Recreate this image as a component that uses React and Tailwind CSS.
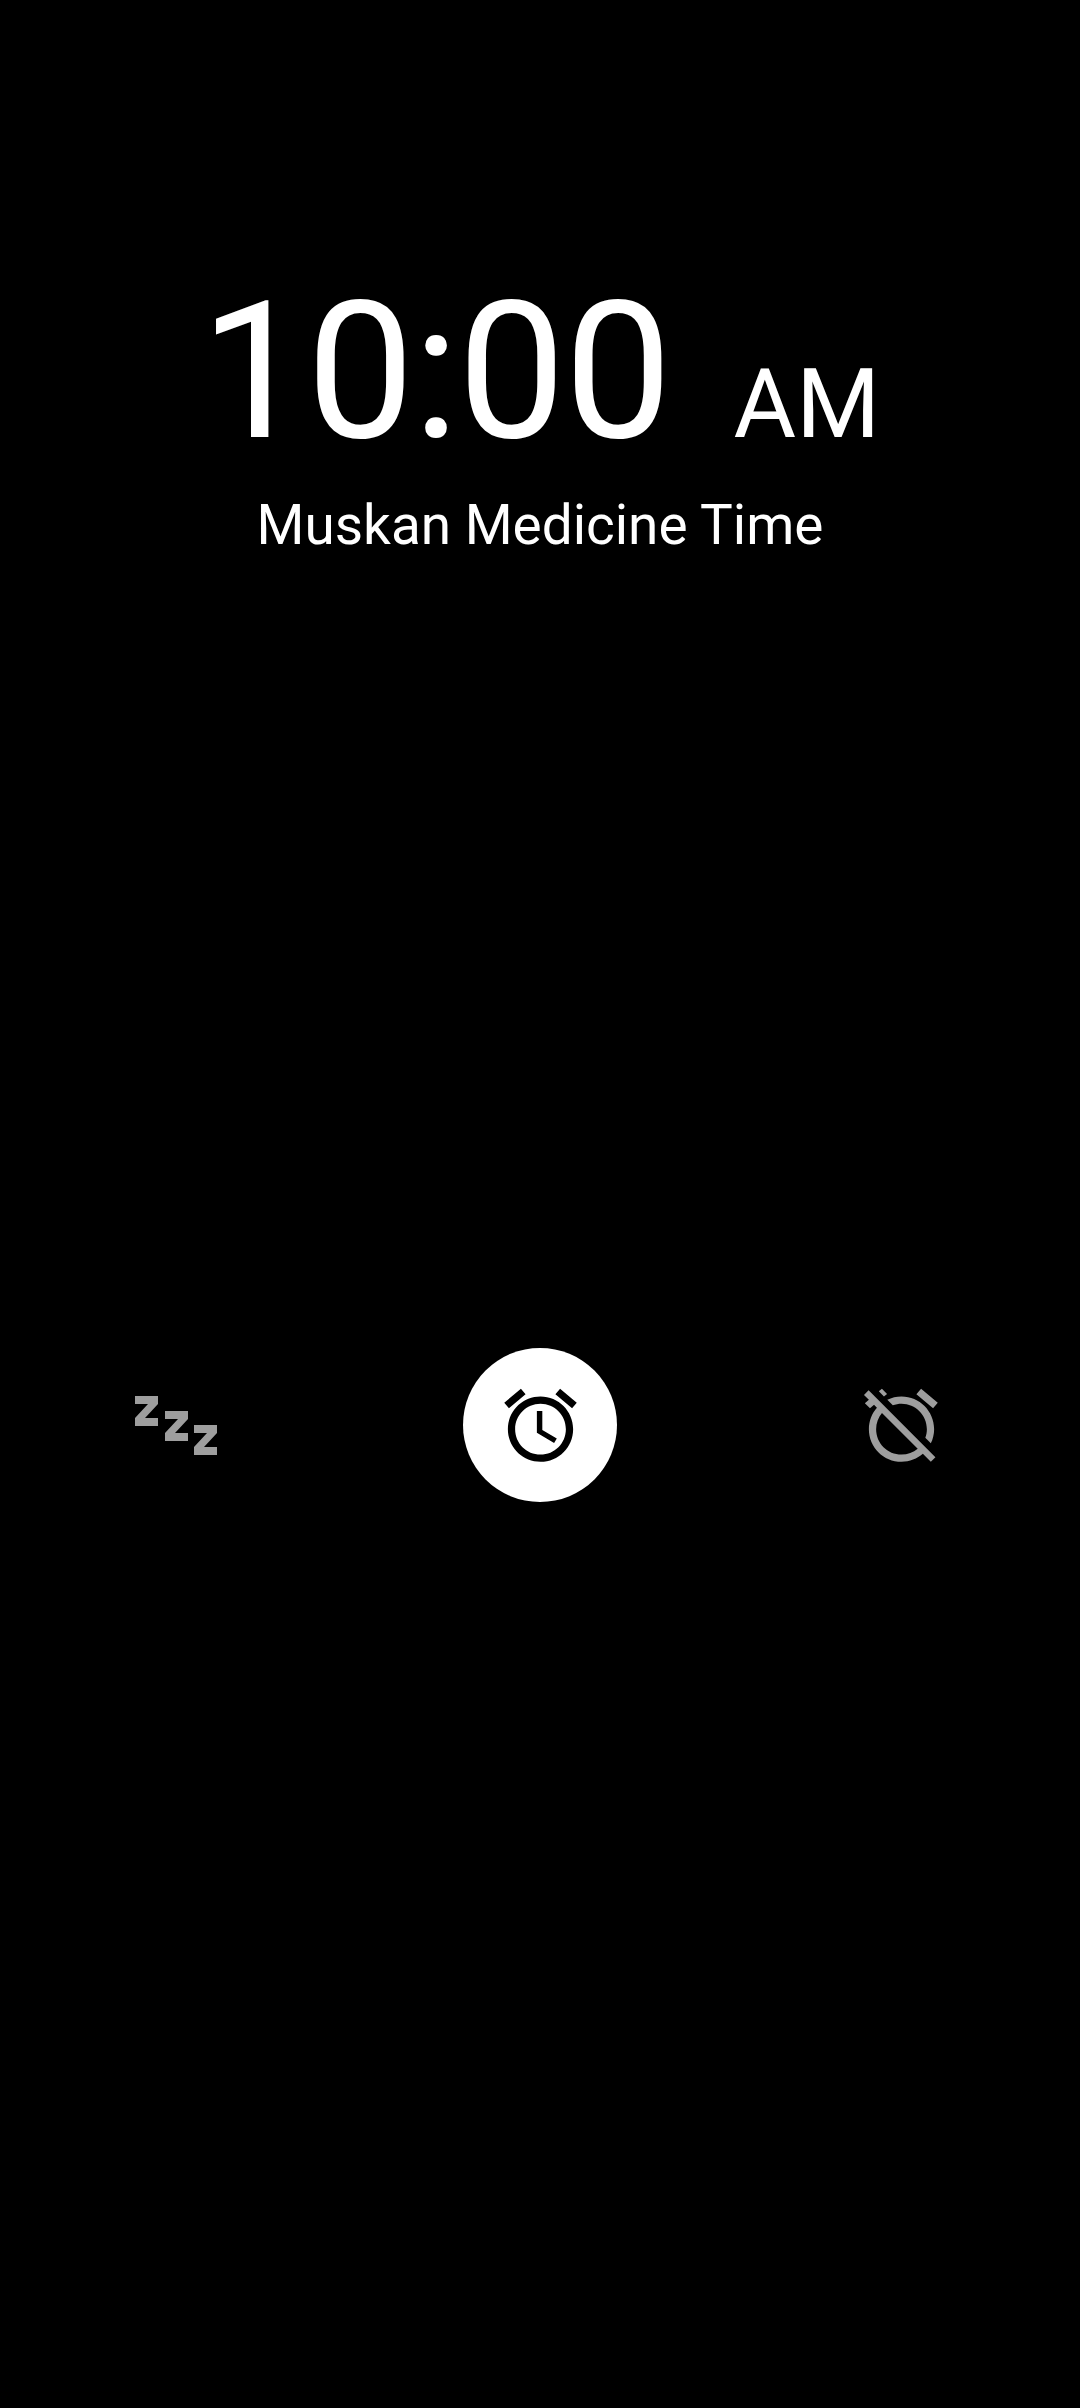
const roboto = { fontFamily: 'Roboto, sans-serif' };

const ZzzIcon = () => (
  <svg width="82" height="59" viewBox="0 0 82 59" fill="#9e9e9e">
    <path d="M0 0H23V8L10 22H23V30H0V22L13 8H0Z" />
    <path d="M30 15H53V23L40 37H53V45H30V37L43 23H30Z" />
    <path d="M59 29H82V37L69 51H82V59H59V51L72 37H59Z" />
  </svg>
);

const AlarmIcon = () => (
  <svg width="87" height="87" viewBox="0 0 24 24" fill="#000">
    <path d="M22 5.72l-4.6-3.86-1.29 1.53 4.6 3.86L22 5.72zM7.88 3.39L6.6 1.86 2 5.71l1.29 1.53 4.59-3.85zM12.5 8H11v6l4.75 2.85.75-1.23-4-2.37V8zM12 4c-4.97 0-9 4.03-9 9s4.03 9 9 9 9-4.03 9-9-4.03-9-9-9zm0 16c-3.87 0-7-3.13-7-7s3.13-7 7-7 7 3.13 7 7-3.13 7-7 7z" />
  </svg>
);

const AlarmOffIcon = () => (
  <svg className="mr-[6px]" width="87" height="87" viewBox="0 0 24 24" fill="#9e9e9e">
    <path d="M12 6c3.87 0 7 3.13 7 7 0 .84-.16 1.65-.43 2.4l1.52 1.52c.58-1.19.91-2.53.91-3.92 0-4.97-4.03-9-9-9-1.39 0-2.73.33-3.92.91L9.6 6.43C10.35 6.16 11.16 6 12 6zm10-.28l-4.6-3.86-1.29 1.53 4.6 3.86L22 5.72zM2.92 2.29L1.65 3.57 3 4.9l-1.11.93 1.42 1.42 1.11-.94.8.8C3.83 8.69 3 10.75 3 13c0 4.97 4.03 9 9 9 2.25 0 4.31-.83 5.89-2.2l2.2 2.2 1.27-1.27L3.89 3.27l-.97-.98zm13.55 16.1C15.26 19.39 13.7 20 12 20c-3.87 0-7-3.13-7-7 0-1.7.61-3.26 1.61-4.47l9.86 9.86zM8.02 3.28L6.6 1.86l-.86.71 1.42 1.42.86-.71z" />
  </svg>
);

export default function App() {
  return (
    <div className="flex h-[2408px] w-[1080px] flex-col items-center bg-black text-white" style={roboto}>
      <div className="mt-[258px] flex items-baseline justify-center">
        <span className="text-[192px] leading-[228px] tracking-[-1.5px]">10:00</span>
        <span className="ml-[63px] text-[96px] leading-[114px]">AM</span>
      </div>
      <p className="mt-[7px] text-[54.9px] leading-[64px]">Muskan Medicine Time</p>

      <div className="mt-[791px] flex w-full items-center justify-between px-[99px]">
        <button className="flex h-[154px] w-[154px] items-center justify-center">
          <ZzzIcon />
        </button>
        <button className="flex h-[154px] w-[154px] items-center justify-center rounded-full bg-white">
          <AlarmIcon />
        </button>
        <button className="flex h-[154px] w-[154px] items-center justify-center">
          <AlarmOffIcon />
        </button>
      </div>
    </div>
  );
}
